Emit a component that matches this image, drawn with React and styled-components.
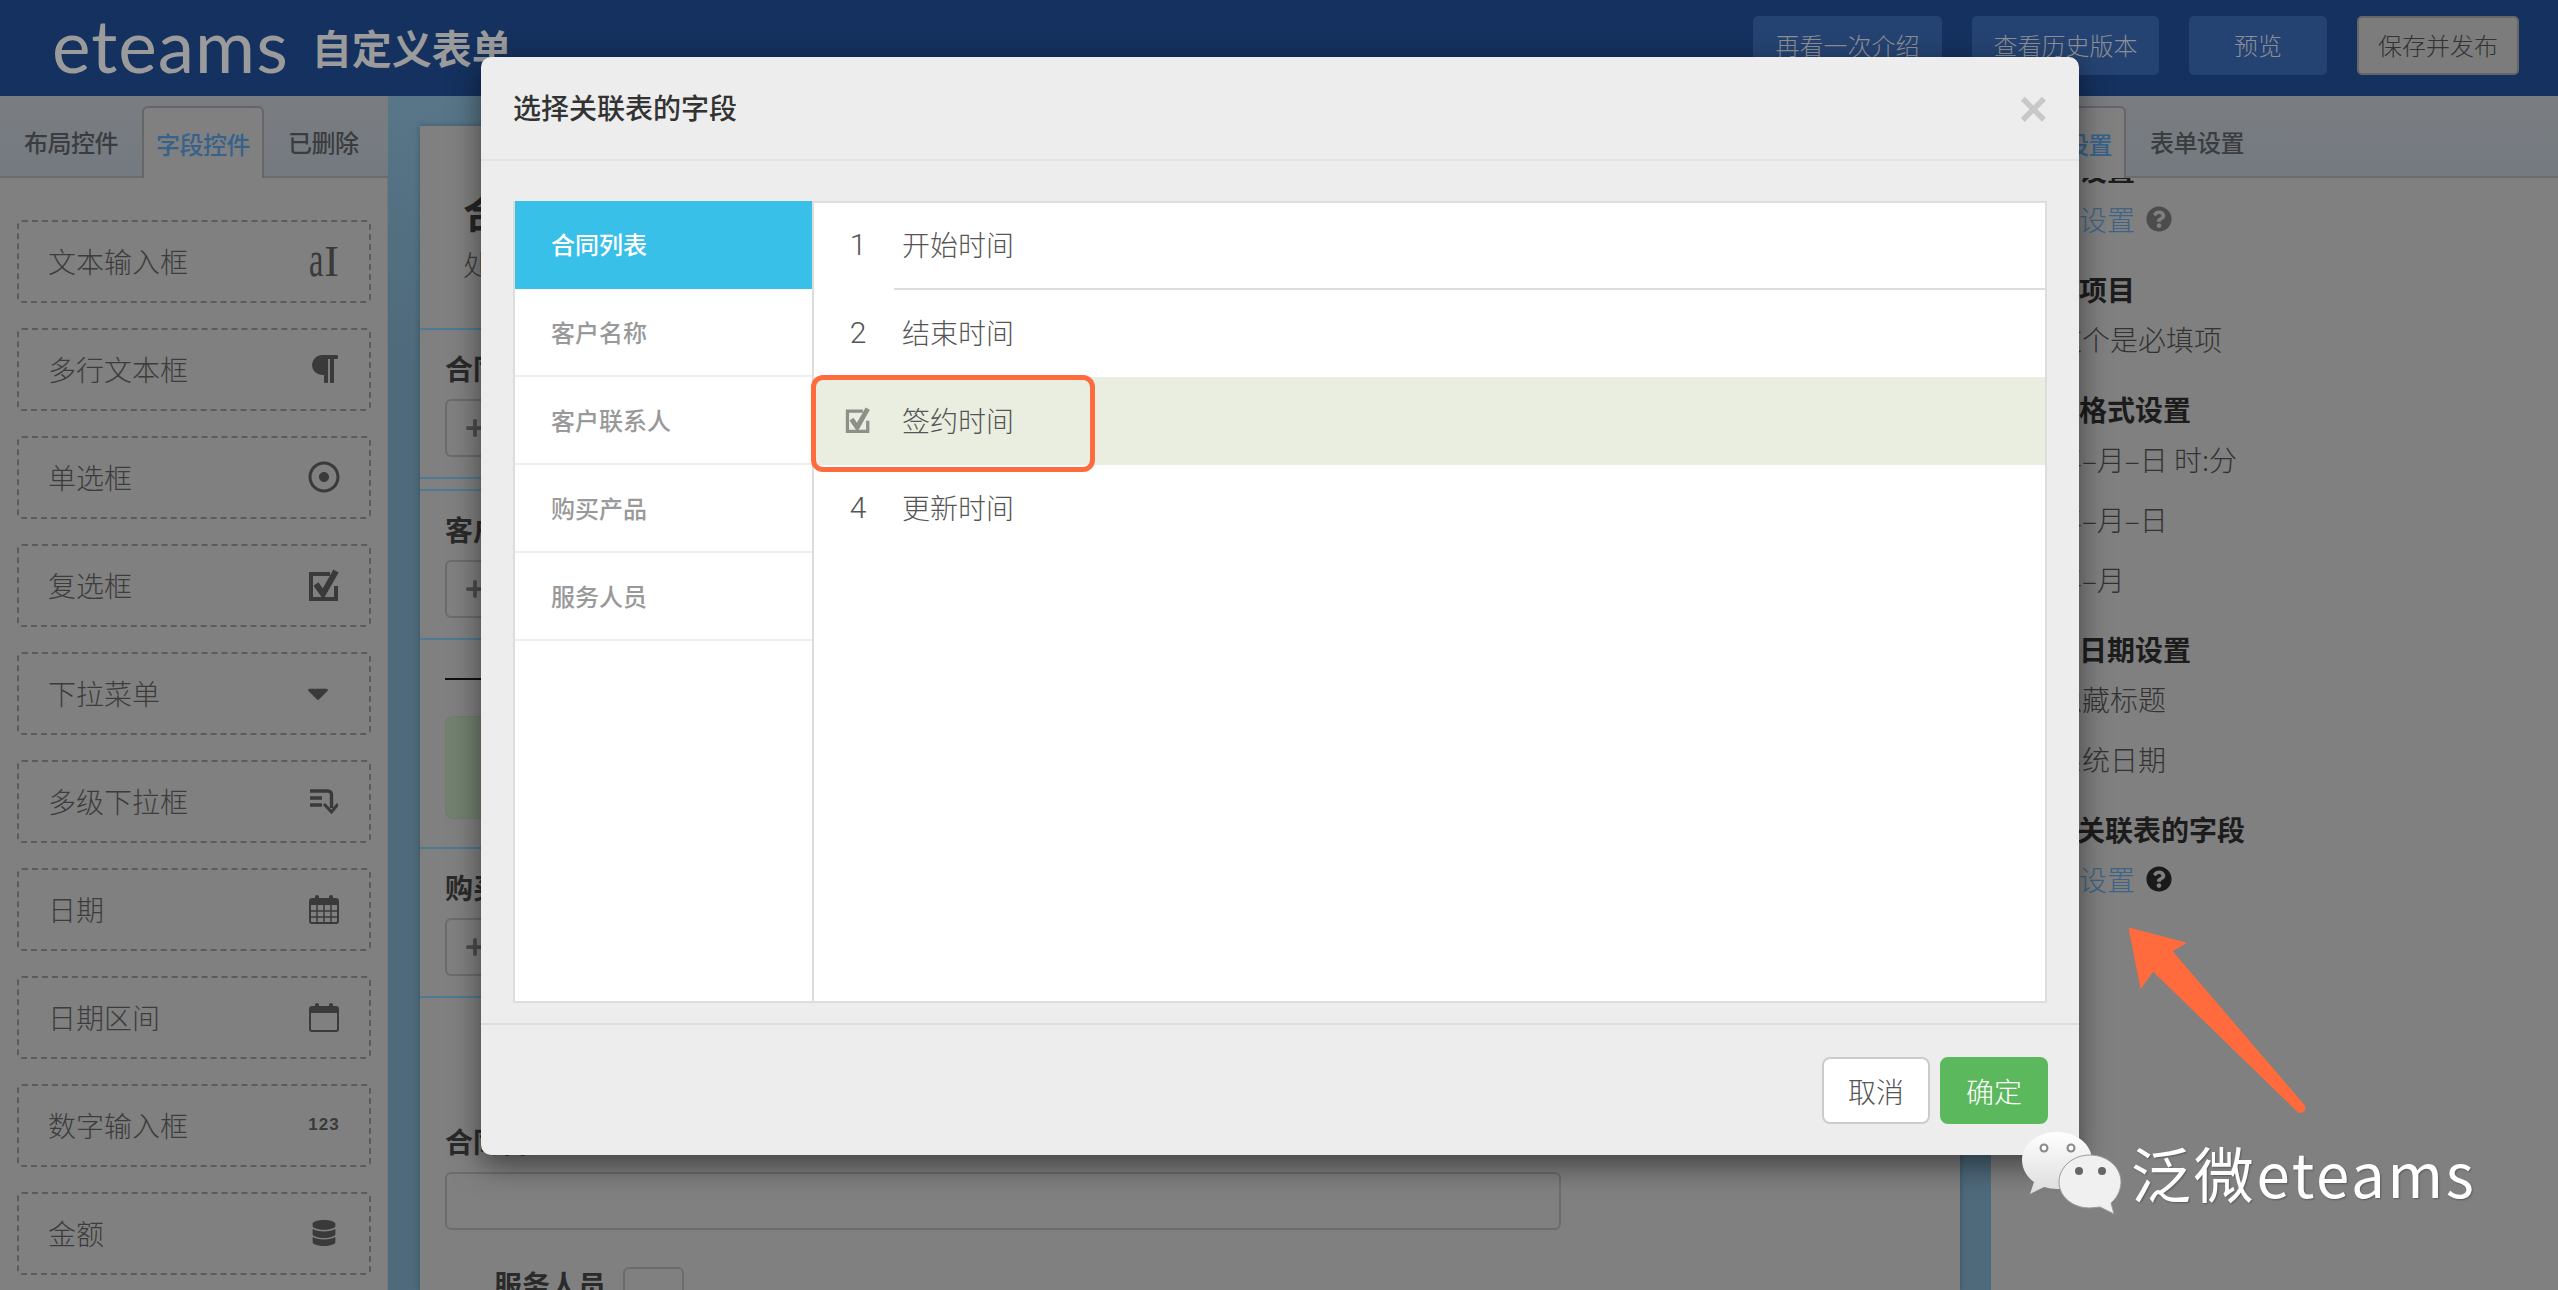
import React from 'react';
import styled, { createGlobalStyle } from 'styled-components';
import { FaParagraph, FaRegDotCircle, FaCaretDown, FaDatabase, FaQuestionCircle, FaPlus } from 'react-icons/fa';

const GlobalStyle = createGlobalStyle`
    html, body {
        margin: 0;
        padding: 0;
        background: #808080;
    }
    * {
        box-sizing: border-box;
    }
`;

const controls = [
    { name: '文本输入框', icon: 'text' },
    { name: '多行文本框', icon: 'para' },
    { name: '单选框', icon: 'radio' },
    { name: '复选框', icon: 'check' },
    { name: '下拉菜单', icon: 'caret' },
    { name: '多级下拉框', icon: 'levels' },
    { name: '日期', icon: 'date' },
    { name: '日期区间', icon: 'range' },
    { name: '数字输入框', icon: 'num' },
    { name: '金额', icon: 'money' },
];

const tables = ['合同列表', '客户名称', '客户联系人', '购买产品', '服务人员'];
const fields = ['开始时间', '结束时间', '签约时间', '更新时间'];

function CheckIcon({ size = 32, color = '#3a3a3a' }) {
    return (
        <svg width={size} height={size} viewBox="0 0 32 32" fill="none">
            <path d="M22 5H3v25h25V17" stroke={color} strokeWidth="4" />
            <path d="M8 15l7 10L28 2" stroke={color} strokeWidth="6" />
        </svg>
    );
}

function LevelsIcon() {
    return (
        <svg width="28" height="26" viewBox="0 0 28 26" fill="none" stroke="#3a3a3a" strokeWidth="3.4">
            <path d="M0 3h18a3.5 3.5 0 0 1 3.5 3.5V20" />
            <path d="M0 10h12M0 17h12" />
            <path d="M14 16l7.5 8 6.5-8" strokeWidth="3" />
        </svg>
    );
}

function DateIcon({ grid }) {
    return (
        <svg width="30" height="30" viewBox="0 0 30 30" fill="none" stroke="#3a3a3a">
            <rect x="1" y="5" width="28" height="24" rx="2" strokeWidth="2" />
            <rect x="6" y="1" width="4" height="7" rx="2" fill="#3a3a3a" strokeWidth="0" />
            <rect x="20" y="1" width="4" height="7" rx="2" fill="#3a3a3a" strokeWidth="0" />
            <path d="M1 6h28v5H1z" fill="#3a3a3a" strokeWidth="0" />
            {grid && <path d="M1 17h28M1 23h28M8 11v18M15 11v18M22 11v18" strokeWidth="1.5" />}
        </svg>
    );
}

function ControlIcon({ type }) {
    if (type === 'text') return <TextGlyph><i>a</i><b>I</b></TextGlyph>;
    if (type === 'para') return <FaParagraph size={32} color="#3a3a3a" />;
    if (type === 'radio') return <FaRegDotCircle size={32} color="#3a3a3a" />;
    if (type === 'check') return <CheckIcon />;
    if (type === 'caret') return <CaretWrap><FaCaretDown size={34} color="#3a3a3a" /></CaretWrap>;
    if (type === 'levels') return <LevelsIcon />;
    if (type === 'date') return <DateIcon grid />;
    if (type === 'range') return <DateIcon />;
    if (type === 'num') return <NumGlyph>123</NumGlyph>;
    return <FaDatabase size={26} color="#3a3a3a" />;
}

function WeChatIcon() {
    return (
        <svg width="100" height="84" viewBox="0 0 100 84">
            <defs>
                <linearGradient id="bubble" x1="0" y1="0" x2="0" y2="1">
                    <stop offset="0" stopColor="#ffffff" />
                    <stop offset="1" stopColor="#dcdcdc" />
                </linearGradient>
            </defs>
            <path d="M35 1C16 1 0 13 0 29c0 9 5 17 12 22l-4 12 14-7c4 1 9 2 13 2 19 0 35-13 35-29S54 1 35 1z" fill="url(#bubble)" />
            <circle cx="22" cy="17" r="4.5" fill="#8a8a8a" />
            <circle cx="22" cy="17" r="2.4" fill="#fff" />
            <circle cx="49" cy="17" r="4.5" fill="#8a8a8a" />
            <circle cx="49" cy="17" r="2.4" fill="#fff" />
            <path d="M68 24c-17 0-31 12-31 27s14 26 31 26c3 0 7-1 10-1l14 7-3-11c6-5 10-13 10-21 0-15-14-27-31-27z" fill="#f0f0f0" stroke="#9a9a9a" strokeWidth="1" />
            <circle cx="57" cy="40" r="4" fill="#666" />
            <circle cx="80" cy="40" r="4" fill="#666" />
        </svg>
    );
}

function App() {
    return (
        <Page>
            <GlobalStyle />
            <Header>
                <Brand>
                    <LogoText>eteams</LogoText>
                    <BrandTitle>自定义表单</BrandTitle>
                </Brand>
                <HeaderActions>
                    <HeaderBtn $w={189}>再看一次介绍</HeaderBtn>
                    <HeaderBtn $w={187}>查看历史版本</HeaderBtn>
                    <HeaderBtn $w={138}>预览</HeaderBtn>
                    <HeaderBtn $w={162} $save>保存并发布</HeaderBtn>
                </HeaderActions>
            </Header>

            <Main>
                <LeftPanel>
                    <TabStrip>
                        <Tab>布局控件</Tab>
                        <Tab $active>字段控件</Tab>
                        <Tab>已删除</Tab>
                    </TabStrip>
                    <ControlList>
                        {controls.map((c) => (
                            <ControlItem key={c.name}>
                                <span>{c.name}</span>
                                <IconSlot><ControlIcon type={c.icon} /></IconSlot>
                            </ControlItem>
                        ))}
                    </ControlList>
                </LeftPanel>

                <Gutter>
                    <Sheet>
                        <SheetTitle>
                            <h1>合同列表</h1>
                            <p>处理合同信息</p>
                        </SheetTitle>
                        <Field>
                            <FieldLabel>合同名称</FieldLabel>
                            <AddBox><FaPlus size={20} /></AddBox>
                        </Field>
                        <Field $top={10} $topLine>
                            <FieldLabel>客户名称</FieldLabel>
                            <AddBox><FaPlus size={20} /></AddBox>
                        </Field>
                        <Field $pad={38}>
                            <BlackLine />
                            <GreenBox />
                        </Field>
                        <Field>
                            <FieldLabel>购买产品</FieldLabel>
                            <AddBox><FaPlus size={20} /></AddBox>
                        </Field>
                        <LastField>
                            <FieldLabel>合同备注</FieldLabel>
                            <WideInput />
                            <ServiceRow>
                                <span>服务人员</span>
                                <SmallBox />
                            </ServiceRow>
                        </LastField>
                    </Sheet>
                </Gutter>

                <RightPanel>
                    <TabStrip $right>
                        <Tab $active>字段设置</Tab>
                        <Tab>表单设置</Tab>
                    </TabStrip>
                    <SettingsScroll>
                        <SettingsGroup>
                            <SettingHead>关联设置</SettingHead>
                            <LinkRow>
                                <a>字段设置</a>
                                <FaQuestionCircle size={26} color="#4c4c4c" />
                            </LinkRow>
                        </SettingsGroup>
                        <SettingsGroup>
                            <SettingHead>必填项目</SettingHead>
                            <SettingItem>这个是必填项</SettingItem>
                        </SettingsGroup>
                        <SettingsGroup>
                            <SettingHead>日期格式设置</SettingHead>
                            <SettingItem>年–月–日 时:分</SettingItem>
                            <SettingItem>年–月–日</SettingItem>
                            <SettingItem>年–月</SettingItem>
                        </SettingsGroup>
                        <SettingsGroup>
                            <SettingHead>默认日期设置</SettingHead>
                            <SettingItem>隐藏标题</SettingItem>
                            <SettingItem>系统日期</SettingItem>
                        </SettingsGroup>
                        <SettingsGroup>
                            <SettingHead $pull>选择关联表的字段</SettingHead>
                            <LinkRow>
                                <a>字段设置</a>
                                <FaQuestionCircle size={26} color="#1a1a1a" />
                            </LinkRow>
                        </SettingsGroup>
                    </SettingsScroll>
                </RightPanel>
            </Main>

            <Modal>
                <ModalHead>
                    <ModalTitle>选择关联表的字段</ModalTitle>
                    <CloseX>×</CloseX>
                </ModalHead>
                <ModalBody>
                    <PickerBox>
                        <TableList>
                            {tables.map((t, i) => (
                                <TableItem key={t} $active={i === 0}>{t}</TableItem>
                            ))}
                        </TableList>
                        <FieldList>
                            {fields.map((f, i) => (
                                <FieldRow key={f} $selected={i === 2}>
                                    <RowNum>
                                        {i === 2 ? <CheckIcon size={26} color="#8d8f88" /> : i + 1}
                                    </RowNum>
                                    <RowName $divider={i === 0}>{f}</RowName>
                                    {i === 2 && <Highlight />}
                                </FieldRow>
                            ))}
                        </FieldList>
                    </PickerBox>
                </ModalBody>
                <ModalFoot>
                    <FootBtn>取消</FootBtn>
                    <FootBtn $primary>确定</FootBtn>
                </ModalFoot>
            </Modal>

            <Arrow viewBox="0 0 190 200" width="190" height="200">
                <path
                    d="M1 1L58 16 44 24 176 178A4.5 4.5 0 0 1 169 184L25 44 13 61z"
                    fill="#ff6b3d"
                    stroke="#ff6b3d"
                    strokeWidth="1"
                    strokeLinejoin="round"
                />
            </Arrow>

            <Watermark>
                <WeChatIcon />
                <WatermarkText>泛微eteams</WatermarkText>
            </Watermark>
        </Page>
    );
}

export default App;

const Page = styled.div`
    position: relative;
    width: 2558px;
    height: 1290px;
    overflow: hidden;
    background: #808080;
    font-family: "Noto Sans CJK SC", "Liberation Sans", sans-serif;
`;

const Header = styled.header`
    height: 96px;
    background: #14315f;
    display: flex;
    align-items: flex-start;
    justify-content: space-between;
    padding: 16px 39px 0 52px;
`;

const Brand = styled.div`
    display: flex;
    align-items: center;
    gap: 23px;
    height: 58px;
    color: #9b9b9b;
`;

const LogoText = styled.span`
    font-family: "Lato", sans-serif;
    font-size: 73px;
    line-height: 58px;
    font-weight: 400;
    letter-spacing: 1px;
`;

const BrandTitle = styled.span`
    font-size: 40px;
    font-weight: 700;
    line-height: 58px;
    margin-top: 4px;
`;

const HeaderActions = styled.div`
    display: flex;
    gap: 30px;
`;

const HeaderBtn = styled.div`
    width: ${(p) => p.$w}px;
    height: 59px;
    padding-bottom: 2px;
    border-radius: 5px;
    display: flex;
    align-items: center;
    justify-content: center;
    font-size: 24px;
    font-weight: 300;
    background: ${(p) => (p.$save ? '#7c7c7c' : '#254372')};
    color: ${(p) => (p.$save ? '#333' : '#8d8f94')};
    border: ${(p) => (p.$save ? '2px solid #666' : 'none')};
`;

const Main = styled.div`
    display: flex;
    height: 1194px;
`;

const LeftPanel = styled.aside`
    width: 388px;
    background: #808080;
    box-shadow: inset -1px 0 0 #777;
`;

const TabStrip = styled.div`
    height: 82px;
    padding-top: 10px;
    padding-left: ${(p) => (p.$right ? '13px' : '0')};
    display: flex;
    align-items: stretch;
    background: linear-gradient(#797d82, #757a80);
    border-bottom: 2px solid #6c6c6c;
`;

const Tab = styled.div`
    flex: none;
    white-space: nowrap;
    display: flex;
    align-items: center;
    font-size: 24px;
    letter-spacing: -0.5px;
    font-weight: 500;
    height: ${(p) => (p.$active ? '72px' : '70px')};
    padding: ${(p) => (p.$active ? '0 12px' : '0 24px')};
    color: ${(p) => (p.$active ? '#36628c' : '#3a3d40')};
    background: ${(p) => (p.$active ? '#808080' : 'transparent')};
    border: ${(p) => (p.$active ? '2px solid #666' : 'none')};
    border-bottom: none;
    border-radius: 6px 6px 0 0;
`;

const ControlList = styled.div`
    display: flex;
    flex-direction: column;
    gap: 25px;
    padding: 42px 17px 0;
`;

const ControlItem = styled.div`
    height: 83px;
    border: 2px dashed #5c5c5c;
    border-radius: 5px;
    display: flex;
    align-items: center;
    justify-content: space-between;
    padding: 0 28px 2px 29px;
    font-size: 28px;
    font-weight: 300;
    color: #3c3c3c;
`;

const IconSlot = styled.div`
    width: 34px;
    display: flex;
    justify-content: center;
    align-items: center;
`;

const TextGlyph = styled.span`
    display: inline-flex;
    align-items: baseline;
    font-family: "Liberation Serif", serif;
    line-height: 34px;
    color: #3a3a3a;
    i {
        font-style: normal;
        font-size: 50px;
        width: 15px;
        transform: scaleX(0.65);
        transform-origin: left;
    }
    b {
        font-weight: 400;
        font-size: 44px;
        margin-left: 0;
    }
`;

const CaretWrap = styled.span`
    display: flex;
    margin-left: -12px;
`;

const NumGlyph = styled.span`
    font-family: "Liberation Sans", sans-serif;
    font-size: 17px;
    font-weight: 700;
    letter-spacing: 1px;
    color: #3a3a3a;
`;

const Gutter = styled.div`
    width: 1603px;
    padding: 30px 31px 0 32px;
    background: linear-gradient(#587688, #4e6a7b 22%);
`;

const Sheet = styled.section`
    background: #808080;
    height: 100%;
    color: #262626;
    box-shadow: 0 0 6px rgba(0, 0, 0, 0.25);
`;

const SheetTitle = styled.div`
    height: 204px;
    padding: 58px 0 0 43px;
    border-bottom: 2px solid #4d7a94;
    h1 {
        margin: 0;
        font-size: 40px;
        line-height: 54px;
        font-weight: 700;
    }
    p {
        margin: 4px 0 0;
        font-size: 28px;
        line-height: 44px;
        font-weight: 300;
        color: #3c3c3c;
    }
`;

const Field = styled.div`
    margin-top: ${(p) => p.$top || 0}px;
    padding: ${(p) => p.$pad || 23}px 0 20px 25px;
    border-bottom: 2px solid #4d7a94;
    border-top: ${(p) => (p.$topLine ? '2px solid #4d7a94' : 'none')};
`;

const FieldLabel = styled.div`
    font-size: 28px;
    line-height: 30px;
    font-weight: 700;
    color: #2a2a2a;
    margin-bottom: 16px;
    white-space: nowrap;
`;

const AddBox = styled.div`
    width: 120px;
    height: 58px;
    border: 2px solid #6c6c6c;
    border-radius: 6px;
    display: flex;
    align-items: center;
    padding-left: 18px;
    color: #4c4c4c;
`;

const BlackLine = styled.div`
    height: 2px;
    background: #111;
    margin-bottom: 36px;
`;

const GreenBox = styled.div`
    width: 400px;
    height: 103px;
    margin-bottom: 8px;
    border: 1px solid #6e7e6b;
    border-radius: 8px;
    background: #728170;
`;

const LastField = styled.div`
    padding: 128px 0 0 25px;
`;

const WideInput = styled.div`
    width: 1116px;
    height: 58px;
    border: 2px solid #6c6c6c;
    border-radius: 6px;
`;

const ServiceRow = styled.div`
    display: flex;
    align-items: flex-start;
    margin: 37px 0 0 49px;
    gap: 17px;
    font-size: 28px;
    font-weight: 700;
    color: #2a2a2a;
    span {
        margin-top: 2px;
        line-height: 30px;
    }
`;

const SmallBox = styled.div`
    width: 61px;
    height: 60px;
    border: 2px solid #6c6c6c;
    border-radius: 6px;
`;

const RightPanel = styled.aside`
    width: 567px;
    background: #808080;
`;

const SettingsScroll = styled.div`
    height: 1112px;
    overflow: hidden;
    padding-left: 32px;
    background: #808080;
`;

const SettingsGroup = styled.div`
    display: flex;
    flex-direction: column;
    &:first-child {
        margin-top: -24px;
    }
    & + & {
        margin-top: 40px;
    }
`;

const SettingHead = styled.div`
    font-size: 28px;
    line-height: 30px;
    font-weight: 700;
    color: #1c1c1c;
    margin-left: ${(p) => (p.$pull ? '-2px' : '0')};
`;

const SettingItem = styled.div`
    font-size: 28px;
    line-height: 30px;
    font-weight: 300;
    color: #333;
    margin-top: 20px;
    margin-left: 31px;
    & + & {
        margin-top: 30px;
    }
`;

const LinkRow = styled.div`
    display: flex;
    align-items: center;
    gap: 11px;
    height: 30px;
    margin-top: 20px;
    font-size: 28px;
    font-weight: 300;
    a {
        color: #3e6386;
    }
`;

const Modal = styled.div`
    position: absolute;
    left: 481px;
    top: 57px;
    width: 1598px;
    height: 1098px;
    display: flex;
    flex-direction: column;
    background: #ededed;
    border-radius: 10px;
    box-shadow: 0 10px 30px rgba(0, 0, 0, 0.5);
`;

const ModalHead = styled.div`
    height: 104px;
    flex: none;
    padding: 0 31px 2px 32px;
    display: flex;
    align-items: center;
    justify-content: space-between;
    border-bottom: 2px solid #e4e4e4;
`;

const ModalTitle = styled.h4`
    margin: 0;
    font-size: 28px;
    font-weight: 500;
    color: #333;
`;

const CloseX = styled.span`
    font-family: "Liberation Sans", sans-serif;
    font-size: 50px;
    font-weight: 700;
    line-height: 44px;
    margin-top: 4px;
    color: #c8c8c8;
`;

const ModalBody = styled.div`
    padding: 40px 32px 20px;
    flex: none;
`;

const PickerBox = styled.div`
    height: 802px;
    display: grid;
    grid-template-columns: 299px 1fr;
    background: #fff;
    border: 2px solid #ddd;
`;

const TableList = styled.div`
    margin-top: -2px;
    border-right: 2px solid #ddd;
    margin-bottom: -2px;
`;

const TableItem = styled.div`
    height: 88px;
    padding-left: 36px;
    padding-bottom: 2px;
    display: flex;
    align-items: center;
    font-size: 24px;
    font-weight: 500;
    color: ${(p) => (p.$active ? '#fff' : '#999')};
    background: ${(p) => (p.$active ? '#38c0e9' : '#fff')};
    border-bottom: 2px solid ${(p) => (p.$active ? '#38c0e9' : '#eee')};
`;

const FieldList = styled.div`
    margin-top: -1px;
    display: flex;
    flex-direction: column;
`;

const FieldRow = styled.div`
    position: relative;
    height: 87.5px;
    display: grid;
    grid-template-columns: 80px 1fr;
    background: ${(p) => (p.$selected ? '#e9eee0' : 'transparent')};
`;

const RowNum = styled.div`
    padding: 0 0 2px 8px;
    display: flex;
    align-items: center;
    justify-content: center;
    font-family: "Roboto", sans-serif;
    font-size: 30px;
    font-weight: 300;
    color: #555;
`;

const RowName = styled.div`
    padding: 0 0 2px 8px;
    display: flex;
    align-items: center;
    font-size: 28px;
    font-weight: 300;
    color: #555;
    border-bottom: ${(p) => (p.$divider ? '2px solid #ddd' : 'none')};
`;

const Highlight = styled.div`
    position: absolute;
    left: -3px;
    top: -2px;
    width: 284px;
    height: 97px;
    border: 5px solid #ff6b3d;
    border-radius: 12px;
`;

const ModalFoot = styled.div`
    flex: 1;
    border-top: 2px solid #dedede;
    padding: 32px 31px 0 0;
    display: flex;
    justify-content: flex-end;
    gap: 10px;
`;

const FootBtn = styled.button`
    width: 108px;
    height: 67px;
    border-radius: 8px;
    font-family: inherit;
    font-size: 28px;
    font-weight: 300;
    color: ${(p) => (p.$primary ? '#fff' : '#555')};
    background: ${(p) => (p.$primary ? '#5cb85c' : '#fff')};
    border: 2px solid ${(p) => (p.$primary ? '#5cb85c' : '#ccc')};
`;

const Arrow = styled.svg`
    position: absolute;
    left: 2128px;
    top: 927px;
`;

const Watermark = styled.div`
    position: absolute;
    left: 2022px;
    top: 1131px;
    display: flex;
    align-items: center;
    gap: 9px;
`;

const WatermarkText = styled.span`
    font-size: 60px;
    font-weight: 400;
    color: #fff;
    letter-spacing: 2.7px;
    margin-top: -3px;
    white-space: nowrap;
    text-shadow: 1px 1px 2px rgba(0, 0, 0, 0.3);
`;
